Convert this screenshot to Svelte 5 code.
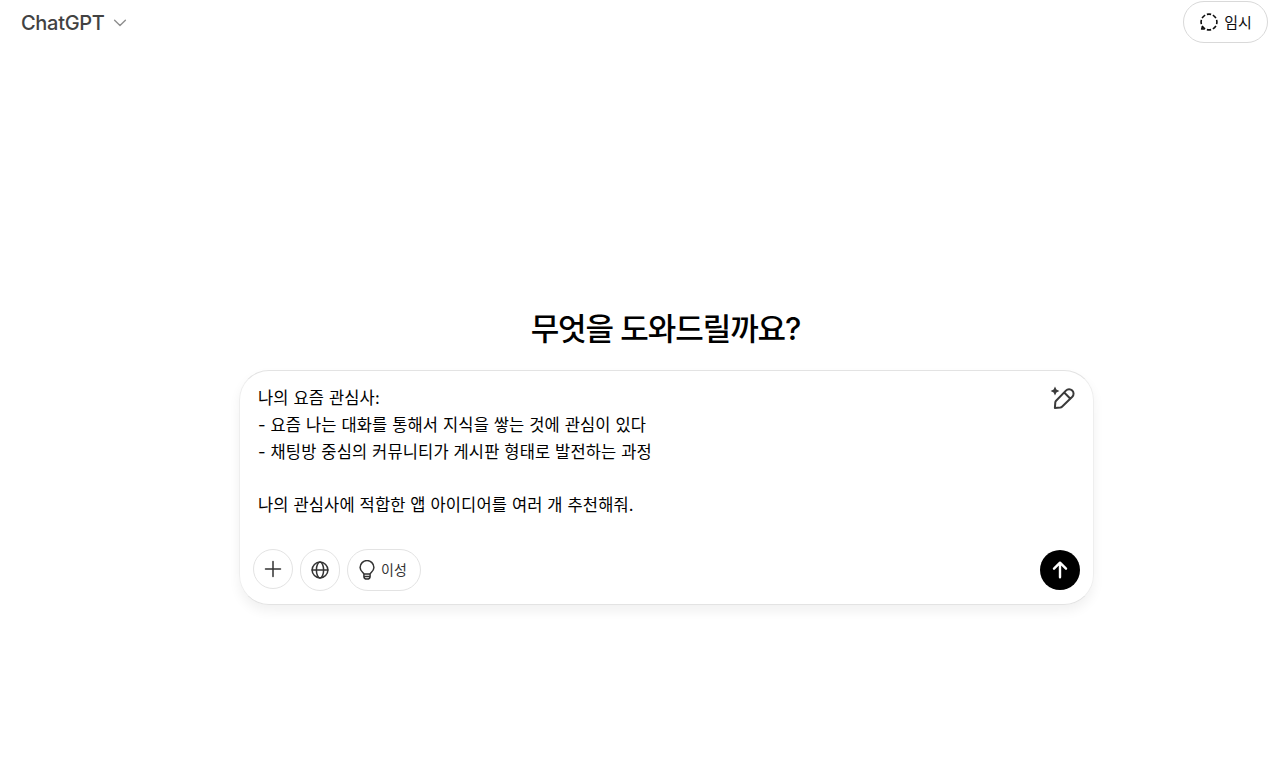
<script lang="ts">
	let model = $state('ChatGPT');
	let prompt = $state([
		'나의 요즘 관심사:',
		'- 요즘 나는 대화를 통해서 지식을 쌓는 것에 관심이 있다',
		'- 채팅방 중심의 커뮤니티가 게시판 형태로 발전하는 과정',
		'',
		'나의 관심사에 적합한 앱 아이디어를 여러 개 추천해줘.'
	]);
</script>

<div class="page">
	<header>
		<button class="model">
			<span>{model}</span>
			<svg width="14" height="14" viewBox="0 0 14 14" aria-hidden="true">
				<path d="M1.6 4.2 7 9.6l5.4-5.4" />
			</svg>
		</button>
		<button class="temporary">
			<svg width="20" height="20" viewBox="0 0 20 20" aria-hidden="true">
				<circle cx="10" cy="10" r="7.9" pathLength="80" stroke-dasharray="7 3" stroke-dashoffset="3.5" />
				<path d="M3.4 14.8 2.7 17h2.9" />
			</svg>
			<span>임시</span>
		</button>
	</header>

	<main>
		<h1>무엇을 도와드릴까요?</h1>

		<section class="composer">
			<div class="body">
				<div class="prompt">
					{#each prompt as line}
						<p>{line}</p>
					{/each}
				</div>
				<button class="edit" aria-label="편집">
					<svg width="26" height="26" viewBox="0 0 26 26" aria-hidden="true">
						<path class="spark" d="M5 1.6 6.4 4.6 9.4 6 6.4 7.4 5 10.4 3.6 7.4.6 6l3-1.4z" />
						<path
							d="M4.9 22.9 5.3 17.4q.1-1 .8-1.700L15.900 5.600a4.300 4.300 0 0 1 6.400 6.200L12 21.800q-.7.7-1.700.8zM14.200 7.500l6.200 6.200"
						/>
					</svg>
				</button>
			</div>

			<div class="tools">
				<button class="round plus" aria-label="추가">
					<svg width="18" height="18" viewBox="0 0 18 18" aria-hidden="true">
						<path d="M9 1.5v15M1.5 9h15" />
					</svg>
				</button>
				<button class="round" aria-label="검색">
					<svg width="18" height="18" viewBox="0 0 18 18" aria-hidden="true">
						<circle cx="9" cy="9" r="7.9" />
						<ellipse cx="9" cy="9" rx="3.6" ry="7.9" />
						<path d="M1.1 9h15.800" />
					</svg>
				</button>
				<button class="round reason">
					<svg width="16" height="20" viewBox="0 0 16 20" aria-hidden="true">
						<path
							d="M4.900 14C4.800 12.700 1.100 11.400 1.100 7.500a6.900 6.900 0 0 1 13.800 0c0 3.900-3.700 5.200-3.800 6.500zM4.900 14v2.400q0 2.600 3.100 2.600t3.100-2.600V14M5.300 16.400h5.400"
						/>
					</svg>
					<span>이성</span>
				</button>
				<button class="send" aria-label="보내기">
					<svg width="18" height="20" viewBox="0 0 18 20" aria-hidden="true">
						<path d="M9 17.3V3M3 8.7l6-6 6 6" />
					</svg>
				</button>
			</div>
		</section>
	</main>
</div>

<style>
	:global(body) {
		background: #fff;
	}
	.page {
		box-sizing: border-box;
		width: 1280px;
		height: 760px;
		overflow: hidden;
		font-family: Inter, 'Noto Sans CJK KR', sans-serif;
		color: #0d0d0d;
	}
	button {
		box-sizing: border-box;
		display: flex;
		align-items: center;
		padding: 0;
		border: 0;
		background: none;
		color: inherit;
		font: inherit;
	}
	svg {
		flex: none;
		fill: none;
		stroke: currentColor;
		stroke-linecap: round;
		stroke-linejoin: round;
	}
	h1,
	p {
		margin: 0;
	}

	header {
		display: flex;
		justify-content: space-between;
		height: 44px;
		padding: 1px 12px 0 21px;
	}
	.model {
		gap: 8px;
		height: 43px;
		color: #424242;
		font-size: 20px;
		font-weight: 500;
		letter-spacing: -0.3px;
	}
	.model svg {
		color: #8f8f8f;
		stroke-width: 1.4;
	}
	.temporary {
		justify-content: center;
		gap: 5px;
		width: 85px;
		height: 42px;
		border: 1px solid #d9d9d9;
		border-radius: 21px;
		font-size: 15px;
	}
	.temporary span {
		margin-bottom: 2px;
	}
	.temporary svg {
		stroke-width: 1.6;
		stroke-linecap: butt;
	}

	main {
		display: flex;
		flex-direction: column;
		align-items: center;
		width: 855px;
		margin-left: 239px;
		padding-top: 260px;
	}
	h1 {
		height: 48px;
		margin-right: 2px;
		margin-bottom: 18px;
		color: #000;
		font-size: 31px;
		font-weight: 500;
		letter-spacing: -1.05px;
		line-height: 48px;
		white-space: nowrap;
	}
	.composer {
		box-sizing: border-box;
		display: flex;
		flex-direction: column;
		justify-content: space-between;
		width: 855px;
		height: 235px;
		margin-top: -1px;
		padding: 14px 13px 13px;
		border: 1px solid #eee;
		border-top-color: #e3e3e3;
		border-bottom-color: #e3e3e3;
		border-radius: 30px;
		box-shadow: 0 6px 12px rgb(0 0 0 / 0.06);
	}
	.body {
		display: flex;
		justify-content: space-between;
		padding: 0 4px 0 5px;
	}
	.prompt {
		color: #000;
		font-size: 16.5px;
		letter-spacing: 0.15px;
		line-height: 26.8px;
	}
	.prompt p {
		height: 26.8px;
		white-space: nowrap;
	}
	.edit {
		height: 26px;
		color: #3a3a3a;
	}
	.edit svg {
		stroke-width: 2;
	}
	.edit .spark {
		fill: currentColor;
		stroke: none;
	}

	.tools {
		display: flex;
		align-items: center;
		gap: 7px;
		color: #333;
	}
	.round {
		justify-content: center;
		width: 40px;
		height: 42px;
		border: 1px solid #e3e3e3;
		border-radius: 21px;
		stroke-width: 1.5;
	}
	.plus {
		height: 40px;
		margin-bottom: 2px;
	}
	.reason {
		gap: 6px;
		width: 74px;
		padding-right: 2px;
		font-size: 14px;
	}
	.reason span {
		margin-bottom: 2px;
	}
	.send {
		justify-content: center;
		width: 40px;
		height: 40px;
		margin-left: auto;
		border-radius: 50%;
		background: #000;
		color: #fff;
		stroke-width: 2.4;
	}
</style>
